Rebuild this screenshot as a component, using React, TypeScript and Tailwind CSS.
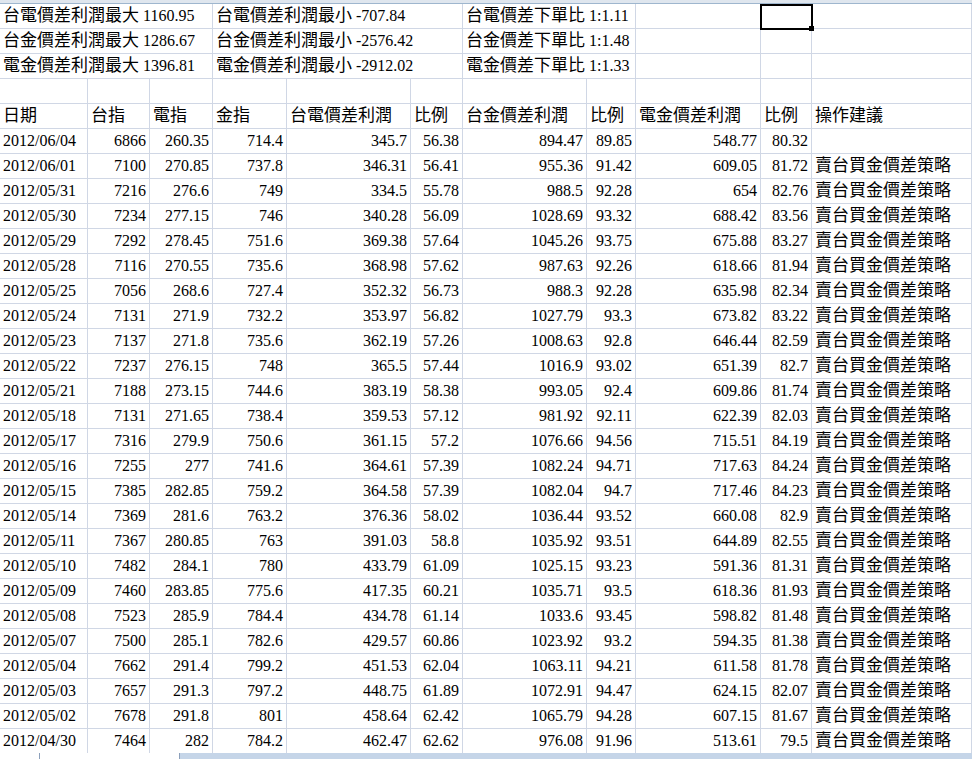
import React from 'react';

const W = [88, 62, 63, 74, 124, 52, 124, 49, 125, 51, 160];

const rows: string[][] = [
  ['2012/06/04', '6866', '260.35', '714.4', '345.7', '56.38', '894.47', '89.85', '548.77', '80.32', ''],
  ['2012/06/01', '7100', '270.85', '737.8', '346.31', '56.41', '955.36', '91.42', '609.05', '81.72'],
  ['2012/05/31', '7216', '276.6', '749', '334.5', '55.78', '988.5', '92.28', '654', '82.76'],
  ['2012/05/30', '7234', '277.15', '746', '340.28', '56.09', '1028.69', '93.32', '688.42', '83.56'],
  ['2012/05/29', '7292', '278.45', '751.6', '369.38', '57.64', '1045.26', '93.75', '675.88', '83.27'],
  ['2012/05/28', '7116', '270.55', '735.6', '368.98', '57.62', '987.63', '92.26', '618.66', '81.94'],
  ['2012/05/25', '7056', '268.6', '727.4', '352.32', '56.73', '988.3', '92.28', '635.98', '82.34'],
  ['2012/05/24', '7131', '271.9', '732.2', '353.97', '56.82', '1027.79', '93.3', '673.82', '83.22'],
  ['2012/05/23', '7137', '271.8', '735.6', '362.19', '57.26', '1008.63', '92.8', '646.44', '82.59'],
  ['2012/05/22', '7237', '276.15', '748', '365.5', '57.44', '1016.9', '93.02', '651.39', '82.7'],
  ['2012/05/21', '7188', '273.15', '744.6', '383.19', '58.38', '993.05', '92.4', '609.86', '81.74'],
  ['2012/05/18', '7131', '271.65', '738.4', '359.53', '57.12', '981.92', '92.11', '622.39', '82.03'],
  ['2012/05/17', '7316', '279.9', '750.6', '361.15', '57.2', '1076.66', '94.56', '715.51', '84.19'],
  ['2012/05/16', '7255', '277', '741.6', '364.61', '57.39', '1082.24', '94.71', '717.63', '84.24'],
  ['2012/05/15', '7385', '282.85', '759.2', '364.58', '57.39', '1082.04', '94.7', '717.46', '84.23'],
  ['2012/05/14', '7369', '281.6', '763.2', '376.36', '58.02', '1036.44', '93.52', '660.08', '82.9'],
  ['2012/05/11', '7367', '280.85', '763', '391.03', '58.8', '1035.92', '93.51', '644.89', '82.55'],
  ['2012/05/10', '7482', '284.1', '780', '433.79', '61.09', '1025.15', '93.23', '591.36', '81.31'],
  ['2012/05/09', '7460', '283.85', '775.6', '417.35', '60.21', '1035.71', '93.5', '618.36', '81.93'],
  ['2012/05/08', '7523', '285.9', '784.4', '434.78', '61.14', '1033.6', '93.45', '598.82', '81.48'],
  ['2012/05/07', '7500', '285.1', '782.6', '429.57', '60.86', '1023.92', '93.2', '594.35', '81.38'],
  ['2012/05/04', '7662', '291.4', '799.2', '451.53', '62.04', '1063.11', '94.21', '611.58', '81.78'],
  ['2012/05/03', '7657', '291.3', '797.2', '448.75', '61.89', '1072.91', '94.47', '624.15', '82.07'],
  ['2012/05/02', '7678', '291.8', '801', '458.64', '62.42', '1065.79', '94.28', '607.15', '81.67'],
  ['2012/04/30', '7464', '282', '784.2', '462.47', '62.62', '976.08', '91.96', '513.61', '79.5'],
];

const head = ['日期', '台指', '電指', '金指', '台電價差利潤', '比例', '台金價差利潤', '比例', '電金價差利潤', '比例', '操作建議'];

const Cell = ({ w, children, right }: { w: number; children?: React.ReactNode; right?: boolean }) => (
  <div
    style={{ width: w }}
    className={`relative h-[25px] shrink-0 border-r border-b border-[#d0d7e5] px-[3px] flex items-center whitespace-nowrap ${right ? 'justify-end' : ''}`}
  >
    {children}
  </div>
);

const Cjk = ({ children }: { children: React.ReactNode }) => <span className="text-[17px]">{children}</span>;

const summary = [
  ['台電價差利潤最大', '1160.95', '台電價差利潤最小', '-707.84', '台電價差下單比', '1:1.11'],
  ['台金價差利潤最大', '1286.67', '台金價差利潤最小', '-2576.42', '台金價差下單比', '1:1.48'],
  ['電金價差利潤最大', '1396.81', '電金價差利潤最小', '-2912.02', '電金價差下單比', '1:1.33'],
];

// overflowing text across cells, covering the grid lines inside its span
const Span = ({ w, label, value }: { w: number; label: string; value: string }) => (
  <div style={{ width: w }} className="h-[25px] shrink-0 border-r border-b border-[#d0d7e5] px-[3px] flex items-center whitespace-nowrap bg-white">
    <Cjk>{label}</Cjk>&nbsp;{value}
  </div>
);

export default function App() {
  const font = { fontFamily: '"Liberation Serif", "Noto Sans CJK TC", serif' };
  return (
    <div className="w-[972px] h-[759px] overflow-hidden bg-white text-[16px] text-black relative" style={font}>
      <div className="h-[4px] bg-[#dfe6ee] border-b border-[#9eb6ce]" />
      <div className="flex flex-col">
        {summary.map((s, i) => (
          <div key={i} className="flex">
            <Span w={213} label={s[0]} value={s[1]} />
            <Span w={250} label={s[2]} value={s[3]} />
            <Span w={173} label={s[4]} value={s[5]} />
            <Cell w={125} />
            <Cell w={51} />
            <Cell w={160} />
          </div>
        ))}
        <div className="flex">
          {W.map((w, k) => <Cell key={k} w={w} />)}
        </div>
        <div className="flex">
          {head.map((h, k) => <Cell key={k} w={W[k]}><Cjk>{h}</Cjk></Cell>)}
        </div>
        {rows.map((r, i) => (
          <div key={i} className="flex">
            {W.map((w, k) => (
              <Cell key={k} w={w} right={k > 0 && k < 10}>
                {k === 10 ? (i === 0 ? '' : <Cjk>賣台買金價差策略</Cjk>) : r[k]}
              </Cell>
            ))}
          </div>
        ))}
      </div>
      <div className="absolute left-[760px] top-[4px] w-[53px] h-[26px] border-2 border-black">
        <div className="absolute -right-[3px] -bottom-[3px] w-[5px] h-[5px] bg-black" />
      </div>
      <div className="absolute left-0 right-0 top-[753px] h-[6px] bg-[#c5d5e8] flex">
        <div className="w-[40px] bg-white border-r border-[#8ca0bb]" />
        <div className="w-[140px] bg-white border-r border-[#8ca0bb]" />
      </div>
    </div>
  );
}
